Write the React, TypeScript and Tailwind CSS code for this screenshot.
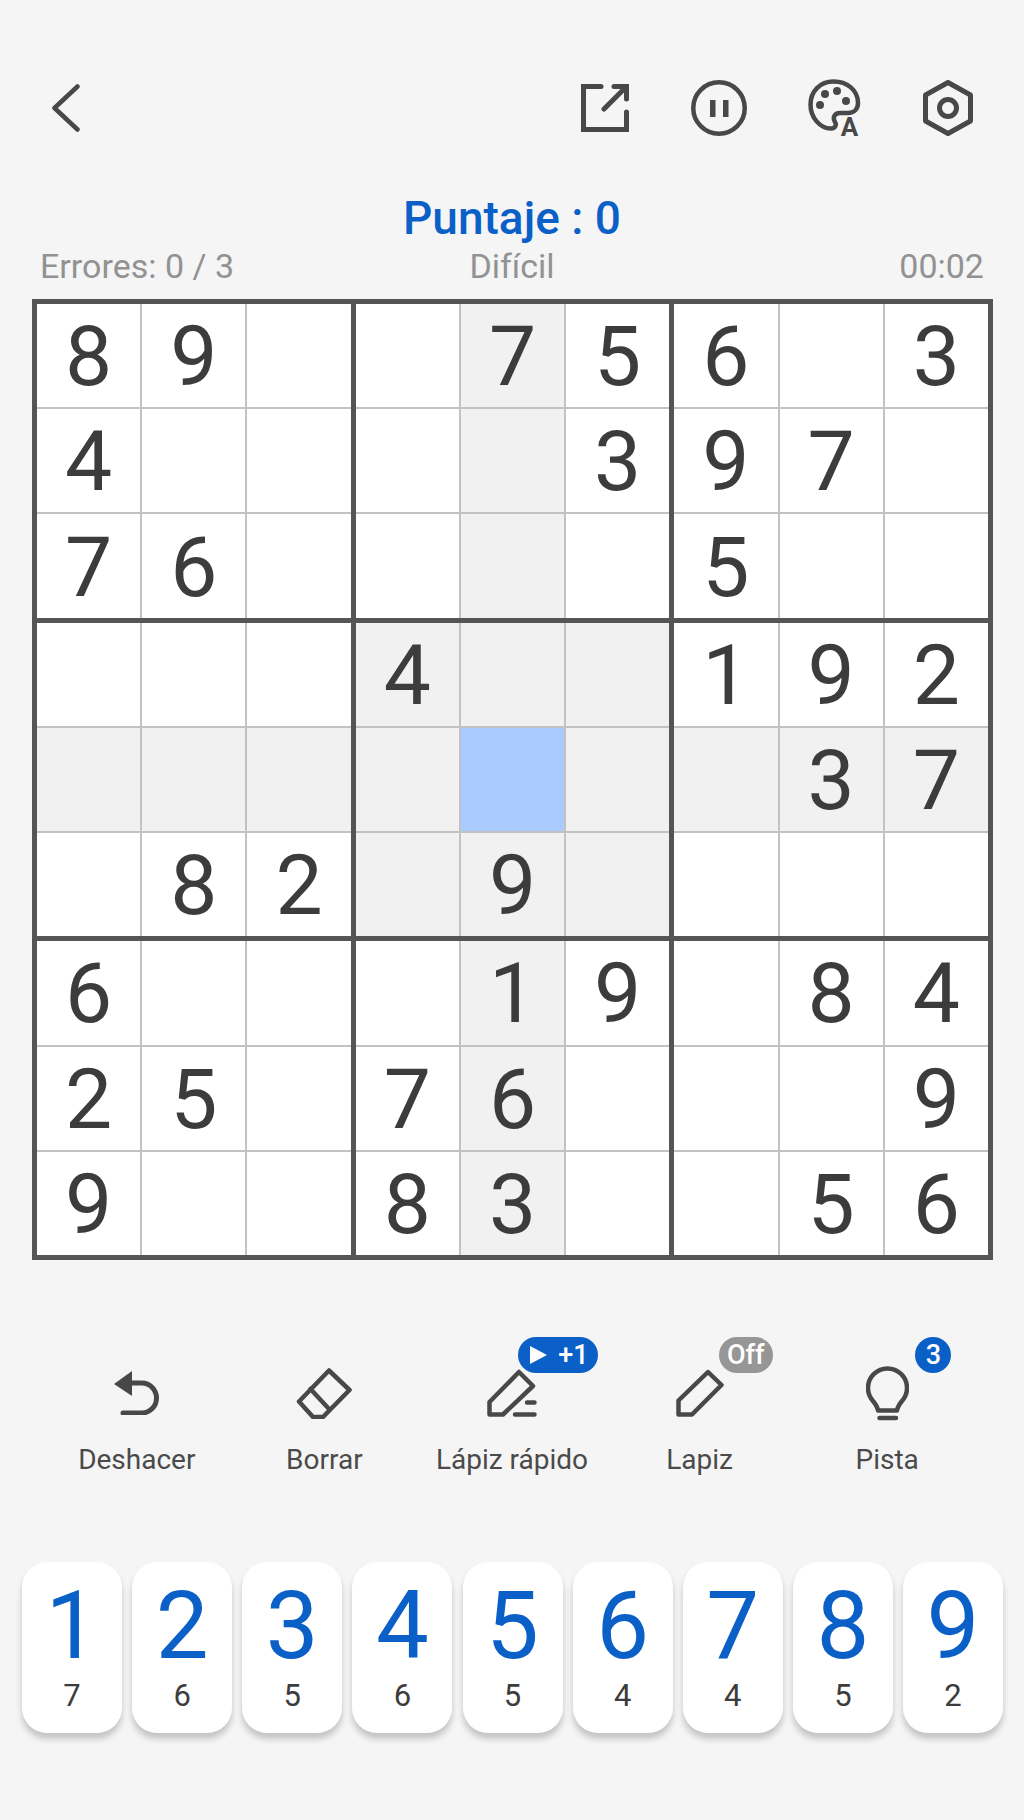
const puzzle = [
  "89..756.3",
  "4....397.",
  "76....5..",
  "...4..192",
  ".......37",
  ".82.9....",
  "6...19.84",
  "25.76...9",
  "9..83..56",
];

const font = { fontFamily: "Roboto, sans-serif" };
const strokeProps = { fill: "none", stroke: "#484848", strokeWidth: 4.5, strokeLinecap: "round", strokeLinejoin: "round" } as const;

function Cell({ r, c }: { r: number; c: number }) {
  const value = puzzle[r][c];
  const selected = r === 4 && c === 4;
  const sameBox = r >= 3 && r <= 5 && c >= 3 && c <= 5;
  const shaded = r === 4 || c === 4 || sameBox;
  const bg = selected ? "bg-[#a9cbff]" : shaded ? "bg-[#f1f1f1]" : "bg-white";
  return (
    <div className={`flex items-center justify-center pt-[3px] text-[84px] leading-none text-[#3c3c3c] ${bg}`}>
      {value === "." ? "" : value}
    </div>
  );
}

function Board() {
  return (
    <div className="mx-[32px] grid h-[961px] w-[961px] grid-cols-3 grid-rows-3 gap-[5px] border-[5px] border-[#555555] bg-[#555555]">
      {[0, 1, 2, 3, 4, 5, 6, 7, 8].map((b) => {
        const br = Math.floor(b / 3) * 3;
        const bc = (b % 3) * 3;
        return (
          <div key={b} className="grid grid-cols-3 grid-rows-3 gap-[2px] bg-[#c2c2c2]">
            {[0, 1, 2].flatMap((i) =>
              [0, 1, 2].map((j) => <Cell key={`${i}${j}`} r={br + i} c={bc + j} />)
            )}
          </div>
        );
      })}
    </div>
  );
}

function TopBar() {
  return (
    <div className="flex h-[58px] items-center pl-[52px] pr-[51px]">
      <svg width="28" height="48" viewBox="0 0 28 48" {...strokeProps} strokeWidth={4.5}>
        <path d="M25.5 2.5L2.5 24L25.5 45.5" />
      </svg>
      <div className="ml-auto flex items-center">
        <svg width="48" height="48" viewBox="0 0 48 48" {...strokeProps} strokeWidth={5} strokeLinecap="round" strokeLinejoin="miter">
          <path d="M20 2.5H2.5V45.5H45.5V28" />
          <path d="M23 25L45 3M33 2.5H45.5V15" />
        </svg>
        <svg className="ml-[62px]" width="56" height="56" viewBox="0 0 56 56">
          <circle cx="28" cy="28" r="25.75" fill="none" stroke="#484848" strokeWidth="4.5" />
          <rect x="19" y="20" width="5.5" height="17" fill="#484848" />
          <rect x="32" y="20" width="5.5" height="17" fill="#484848" />
        </svg>
        <svg className="ml-[61px] overflow-visible" width="52" height="58" viewBox="0 0 52 58">
          <path
            d="M25.5 2.5C12 2.5 2.5 12.5 2.5 25.5C2.5 38.5 12 49.5 23 49.5C27 49.5 29 46 27 43C24.5 39 26 34 32 34H40C46 34 50 30 50 24C50 11 39 2.5 25.5 2.5Z"
            {...strokeProps}
          />
          <circle cx="17" cy="15" r="4" fill="#484848" />
          <circle cx="29" cy="12" r="4" fill="#484848" />
          <circle cx="38" cy="22" r="4" fill="#484848" />
          <circle cx="12" cy="26" r="4" fill="#484848" />
          <text x="41.5" y="57" textAnchor="middle" fontSize="26" fontWeight="700" fill="#484848" fontFamily="Roboto, sans-serif">A</text>
        </svg>
        <svg className="ml-[63px]" width="50" height="56" viewBox="0 0 50 56" {...strokeProps} strokeWidth={5}>
          <path d="M25 2.5L47.5 15V41L25 53.5L2.5 41V15Z" />
          <circle cx="25" cy="28" r="8.5" />
        </svg>
      </div>
    </div>
  );
}

function Tool({ label, icon, badge }: { label: string; icon: React.ReactNode; badge?: React.ReactNode }) {
  return (
    <div className="relative flex w-[188px] flex-col items-center">
      {badge}
      <div className="flex h-[56px] items-center justify-center">{icon}</div>
      <div className="mt-[21px] h-[36px] whitespace-nowrap text-[28px] leading-[36px] text-[#4a4a4a]">{label}</div>
    </div>
  );
}

function Tools() {
  return (
    <div className="mt-[105px] flex px-[43px]">
      <Tool
        label="Deshacer"
        icon={
          <svg width="46" height="44" viewBox="0 0 46 44" {...strokeProps} strokeWidth={5}>
            <path d="M0 13L18 0V25Z" fill="#484848" stroke="none" />
            <path d="M16 12H28A14.5 15 0 0 1 28 42H9" />
          </svg>
        }
      />
      <Tool
        label="Borrar"
        icon={
          <svg width="56" height="51" viewBox="0 0 56 51" {...strokeProps}>
            <path d="M33 2.5L53.5 22L27 49H17L3 33.5Z" />
            <path d="M14.5 21L33 41" />
          </svg>
        }
      />
      <Tool
        label="Lápiz rápido"
        icon={
          <svg width="50" height="48" viewBox="0 0 50 48" {...strokeProps}>
            <path d="M2.5 33L32 3L46 17L16 45.5H2.5Z" />
            <path d="M40 33.5H47.5M28 45.5H47.5" />
          </svg>
        }
        badge={
          <div className="absolute left-[100px] top-[-28px] flex h-[36px] w-[80px] items-center rounded-full bg-[#0b60c8] pl-[12px] text-[27px] font-medium leading-none text-white">
            <svg width="17" height="18" viewBox="0 0 17 18">
              <path d="M0 0L17 9L0 18Z" fill="#ffffff" />
            </svg>
            <span className="ml-[11px]">+1</span>
          </div>
        }
      />
      <Tool
        label="Lapiz"
        icon={
          <svg width="48" height="48" viewBox="0 0 48 48" {...strokeProps}>
            <path d="M2.5 31.5L32 3L45.5 16L16 45.5H2.5Z" />
          </svg>
        }
        badge={
          <div className="absolute left-[113px] top-[-28px] flex h-[36px] w-[54px] items-center justify-center rounded-full bg-[#969696] text-[27px] font-medium leading-none text-white">
            Off
          </div>
        }
      />
      <Tool
        label="Pista"
        icon={
          <svg width="43" height="56" viewBox="0 0 43 56" {...strokeProps}>
            <path d="M12 45.5H31C31.5 41.5 34 38.5 36 36A19.5 19.5 0 1 0 7 36C9 38.5 11.5 41.5 12 45.5Z" />
            <path d="M13.5 53H30" />
          </svg>
        }
        badge={
          <div className="absolute left-[120px] top-[-28px] ml-[2px] flex h-[36px] w-[36px] items-center justify-center rounded-full bg-[#0b60c8] text-[27px] font-medium leading-none text-white">
            3
          </div>
        }
      />
    </div>
  );
}

const pad = [
  [1, 7],
  [2, 6],
  [3, 5],
  [4, 6],
  [5, 5],
  [6, 4],
  [7, 4],
  [8, 5],
  [9, 2],
];

function NumberPad() {
  return (
    <div className="mt-[84px] flex gap-[10.125px] pl-[22px]">
      {pad.map(([n, left]) => (
        <div
          key={n}
          className="flex h-[171px] w-[100px] flex-col items-center rounded-[25px] bg-white shadow-[0_6px_6px_rgba(0,0,0,0.2)]"
        >
          <div className="mt-[29px] h-[70px] text-[94px] leading-[70px] text-[#0b60c8]">{n}</div>
          <div className="mt-[17px] h-[36px] text-[31px] leading-[36px] text-[#3c3c3c]">{left}</div>
        </div>
      ))}
    </div>
  );
}

export default function App() {
  return (
    <div className="h-[1820px] w-[1024px] overflow-hidden bg-[#f5f5f5] pt-[79px]" style={font}>
      <TopBar />
      <div className="mt-[56px] h-[50px] text-center text-[46px] font-medium leading-[50px] text-[#0b60c8]">Puntaje : 0</div>
      <div className="mt-[2px] grid h-[42px] grid-cols-3 px-[40px] text-[34px] leading-[42px] text-[#929292]">
        <div>Errores: 0 / 3</div>
        <div className="text-center">Difícil</div>
        <div className="text-right">00:02</div>
      </div>
      <div className="mt-[12px]">
        <Board />
      </div>
      <Tools />
      <NumberPad />
    </div>
  );
}
